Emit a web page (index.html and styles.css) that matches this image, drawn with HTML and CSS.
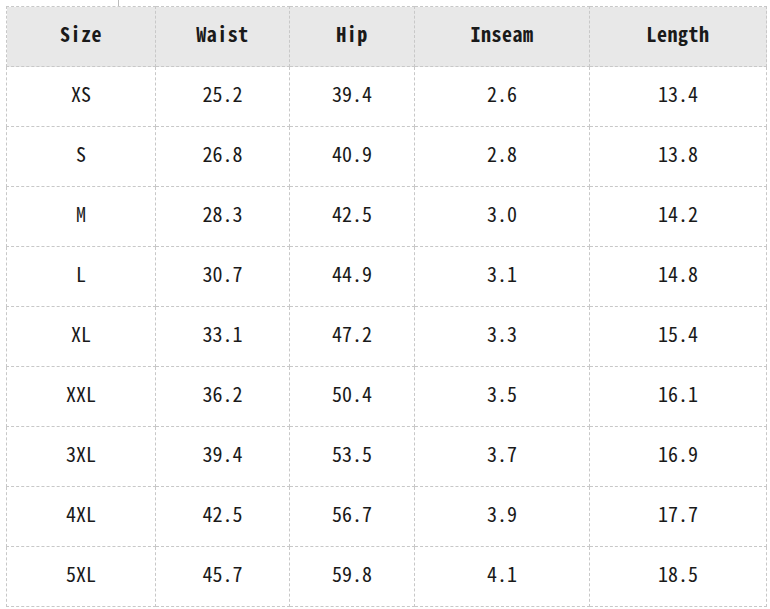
FILE: index.html
```html
<!DOCTYPE html>
<html>
<head>
<meta charset="utf-8">
<link rel="stylesheet" href="styles.css">
</head>
<body>
<div class="tick"></div>
<table class="size-table">
  <colgroup>
    <col class="c1"><col class="c2"><col class="c3"><col class="c4"><col class="c5">
  </colgroup>
  <thead>
    <tr><th>Size</th><th>Waist</th><th>Hip</th><th>Inseam</th><th>Length</th></tr>
  </thead>
  <tbody>
    <tr><td>XS</td><td>25.2</td><td>39.4</td><td>2.6</td><td>13.4</td></tr>
    <tr><td>S</td><td>26.8</td><td>40.9</td><td>2.8</td><td>13.8</td></tr>
    <tr><td>M</td><td>28.3</td><td>42.5</td><td>3.0</td><td>14.2</td></tr>
    <tr><td>L</td><td>30.7</td><td>44.9</td><td>3.1</td><td>14.8</td></tr>
    <tr><td>XL</td><td>33.1</td><td>47.2</td><td>3.3</td><td>15.4</td></tr>
    <tr><td>XXL</td><td>36.2</td><td>50.4</td><td>3.5</td><td>16.1</td></tr>
    <tr><td>3XL</td><td>39.4</td><td>53.5</td><td>3.7</td><td>16.9</td></tr>
    <tr><td>4XL</td><td>42.5</td><td>56.7</td><td>3.9</td><td>17.7</td></tr>
    <tr><td>5XL</td><td>45.7</td><td>59.8</td><td>4.1</td><td>18.5</td></tr>
  </tbody>
</table>
</body>
</html>
```
FILE: styles.css
```css
html, body {
  margin: 0;
  padding: 0;
  background: #ffffff;
}
body {
  padding-left: 6px;
  font-family: "Noto Sans Mono CJK SC", "Noto Sans CJK SC", "Liberation Mono", monospace;
  color: #1a1a1a;
}
.tick {
  width: 0;
  height: 6px;
  margin-left: 112px;
  border-left: 1px solid #bcbcbc;
}
.size-table {
  border-collapse: collapse;
  table-layout: fixed;
  width: 760px;
}
.c1 { width: 149px; }
.c2 { width: 134px; }
.c3 { width: 125px; }
.c4 { width: 175px; }
.c5 { width: 177px; }
.size-table th,
.size-table td {
  border: 1px dashed #c8c8c8;
  height: 53px;
  padding: 0 0 6px 0;
  line-height: 24px;
  text-align: center;
  vertical-align: middle;
  font-size: 20px;
}
.size-table th {
  background: #e8e8e8;
  font-weight: bold;
  letter-spacing: 0.5px;
}
.size-table td {
  font-weight: normal;
}
```
